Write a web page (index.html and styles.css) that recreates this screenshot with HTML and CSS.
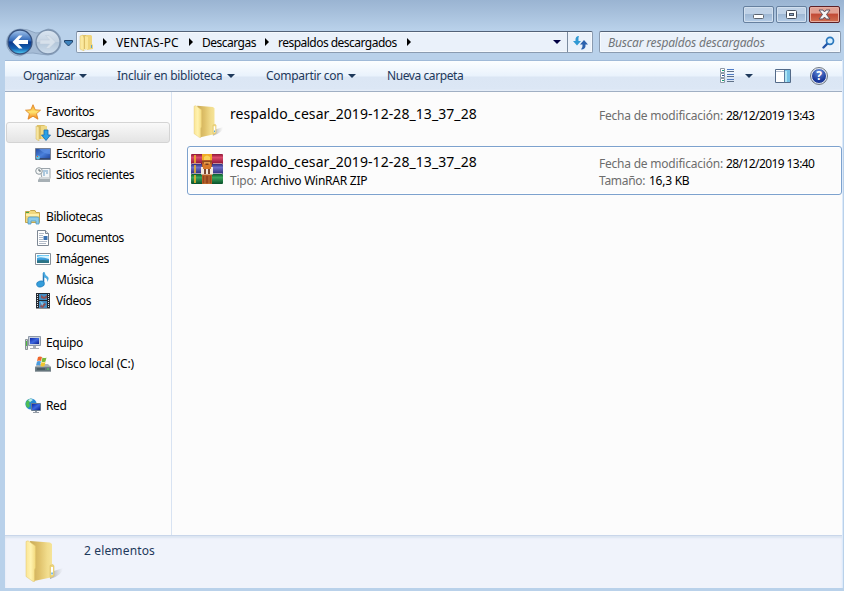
FILE: index.html
```html
<!DOCTYPE html>
<html lang="es">
<head>
<meta charset="utf-8">
<title>respaldos descargados</title>
<link rel="stylesheet" href="styles.css">
</head>
<body>
<svg class="defs" width="0" height="0">
  <defs>
    <linearGradient id="gold" x2="1"><stop offset="0" stop-color="#fbe596"/><stop offset=".5" stop-color="#fff3b0"/><stop offset="1" stop-color="#f3d97d"/></linearGradient>
    <linearGradient id="goldback" x2="1"><stop offset="0" stop-color="#c9aa58"/><stop offset=".4" stop-color="#dfc16a"/><stop offset=".75" stop-color="#f1dc8c"/><stop offset="1" stop-color="#f6e59b"/></linearGradient>
    <linearGradient id="shade" x2="1"><stop offset="0" stop-color="#777" stop-opacity=".6"/><stop offset="1" stop-color="#999" stop-opacity="0"/></linearGradient>
    <linearGradient id="screen" x2="1" y2="1"><stop offset="0" stop-color="#0b25a8"/><stop offset=".5" stop-color="#3d68df"/><stop offset="1" stop-color="#0a1d8c"/></linearGradient>
    <linearGradient id="desk" x2="1" y2="1"><stop offset="0" stop-color="#234a9c"/><stop offset=".5" stop-color="#4a80dc"/><stop offset="1" stop-color="#1c3f96"/></linearGradient>
    <linearGradient id="sky" x2="0" y2="1"><stop offset="0" stop-color="#67c9f5"/><stop offset="1" stop-color="#1674c3"/></linearGradient>
    <linearGradient id="orb" x2="0" y2="1"><stop offset="0" stop-color="#a5c6ec"/><stop offset=".45" stop-color="#2f67b8"/><stop offset=".5" stop-color="#0a3689"/><stop offset=".78" stop-color="#1464b5"/><stop offset="1" stop-color="#55d6f8"/></linearGradient>
    <linearGradient id="orb2" x2="0" y2="1"><stop offset="0" stop-color="#dae5f1"/><stop offset=".48" stop-color="#c6d4e3"/><stop offset=".52" stop-color="#b4c7da"/><stop offset="1" stop-color="#cfdeed"/></linearGradient>
    <linearGradient id="star" x2="0" y2="1"><stop offset="0" stop-color="#f59a22"/><stop offset=".5" stop-color="#ffe673"/><stop offset="1" stop-color="#f17a13"/></linearGradient>
    <linearGradient id="red" x2="0" y2="1"><stop offset="0" stop-color="#8d1636"/><stop offset=".35" stop-color="#dc4a6c"/><stop offset="1" stop-color="#8a1231"/></linearGradient>
    <linearGradient id="blue" x2="0" y2="1"><stop offset="0" stop-color="#30307c"/><stop offset=".35" stop-color="#6d6fc8"/><stop offset="1" stop-color="#2b2b78"/></linearGradient>
    <linearGradient id="green" x2="0" y2="1"><stop offset="0" stop-color="#0b5b30"/><stop offset=".35" stop-color="#3aa45b"/><stop offset="1" stop-color="#07502a"/></linearGradient>
    <symbol id="folder" viewBox="0 0 40 42">
      <path d="M25 38 29 31 38 28Q38 35 25 39Z" fill="url(#shade)"/>
      <path d="M5 1 25 2.500 27 4V27L28 37 9 41Z" fill="url(#goldback)"/>
      <path d="M25 25.500 28 24.500 29 26V36L25 37.500Z" fill="#f0d77d" stroke="#d6b85d" stroke-width=".5"/>
      <path d="M26 27h2v8h-2z" fill="#fff"/><path d="M26.300 32.500h1.500v2h-1.500z" fill="#55a7d8"/>
      <path d="M1 1.500 3 .8 10.500 6V27.500L9.500 30V41.500H8L1 36.500Z" fill="url(#gold)" stroke="#e3c76b" stroke-width=".5"/>
    </symbol>
  </defs>
</svg>
<div class="window">
  <header class="titlebar">
    <div class="controls">
      <span class="ctl"><svg width="31" height="17"><rect x="10.500" y="8.500" width="10" height="4" rx="1" fill="#fff" stroke="#5c6470"/></svg></span>
      <span class="ctl"><svg width="31" height="17"><rect x="10.500" y="4.500" width="10" height="8" rx="1" fill="#fff" stroke="#4b5361"/><rect x="13.500" y="7.500" width="4" height="2" fill="#8ea9c9" stroke="#4b5361"/></svg></span>
      <span class="ctl close"><svg width="31" height="17"><path d="M10 4h4l1.500 2L17 4h4l-3.500 4.500L21 13h-4l-1.500-2-1.500 2h-4l3.500-4.500z" fill="#f5f5f5" stroke="#5f5260"/></svg></span>
    </div>
  </header>
  <div class="navbar">
    <svg class="travel" width="70" height="29">
      <path d="M14 1Q22 1 27 4T42 1A13 13 0 0 1 42 27Q33 26 27 25T14 28A13 13 0 0 1 14 1Z" fill="#a5bcd6" stroke="#8ea6c2"/>
      <circle cx="14" cy="14" r="12" fill="url(#orb)" stroke="#37527e" stroke-width="1.300"/>
      <path d="M6.500 14 13 7.500h3.500L12.500 12H22v4h-9.500l4 4.500H13z" fill="#fff"/>
      <circle cx="42" cy="14" r="12" fill="url(#orb2)" stroke="#7c92ad" stroke-width="1.300"/>
      <path d="M49.500 14 43 7.500h-3.500l4 4.500H34v4h9.500l-4 4.500H43z" fill="#d7e1eb" stroke="#bccbda" stroke-width=".5"/>
      <path d="M58.500 12.500h8v1.500l-4 4-4-4z" fill="#3e83bd" stroke="#20436b"/>
    </svg>
    <div class="address">
      <svg class="addr-icon" width="15" height="17" viewBox="0 0 15 17"><path d="M3 1h6l1 2v12H4z" fill="#dcbf6a"/><path d="M7 1h5l1 1v8l1 1v4l-6 1z" fill="#efd57b"/><path d="M12 11h1v3h-1z" fill="#5aa4d1"/><path d="M1 2l3-1 1 3v13l-4-2z" fill="#fbe99e" stroke="#d9bf67" stroke-width=".5"/><path d="M6 2l3 1v12l-3 1z" fill="#fae79a"/></svg>
      <i class="crumb-arrow a1"></i><span class="crumb c1">VENTAS-PC</span>
      <i class="crumb-arrow"></i><span class="crumb c2">Descargas</span>
      <i class="crumb-arrow"></i><span class="crumb c3">respaldos descargados</span>
      <i class="crumb-arrow"></i>
      <i class="down navy"></i>
      <span class="refresh"><svg width="16" height="14"><path d="M6 0Q2 0 2.500 5H0l4 4.500L8 5H5.500Q5 2 6 0Z" fill="#3099d3"/><path d="M8 13.500q5 0 4.500-5h2.500L11 4 7 8.500h2.500q.5 3-1.500 5Z" fill="#2c62ad"/></svg></span>
    </div>
    <div class="search"><span class="hint">Buscar respaldos descargados</span>
      <svg width="13" height="13"><path d="M1.500 11.500 6 7" stroke="#2253a5" stroke-width="2.400" stroke-linecap="round"/><circle cx="8" cy="4.800" r="3.500" fill="#d7efff" stroke="#2b78bd" stroke-width="1.700"/></svg>
    </div>
  </div>
  <main class="client">
    <div class="toolbar">
      <span class="cmd t1">Organizar</span><i class="down"></i>
      <span class="cmd t2">Incluir en biblioteca</span><i class="down"></i>
      <span class="cmd t3">Compartir con</span><i class="down"></i>
      <span class="cmd t4">Nueva carpeta</span>
      <svg class="view" width="15" height="16"><g fill="#fff" stroke="#8e99a7"><path d="M.5.500h4v4h-4zM.5 5.500h4v4h-4zM.5 10.500h4v4h-4z"/></g><path d="M2 2h2v1H2zM2 12h2v1H2z" fill="#139c70"/><path d="M2 7h2v1H2z" fill="#234f9c"/><path d="M7 1.500h7M7 6.500h7M7 11.500h7" stroke="#507cc5"/><path d="M7 3.500h7M7 8.500h7M7 13.500h7" stroke="#5f7188"/></svg>
      <i class="down"></i>
      <svg class="pane" width="16" height="14"><path d="M.5.500h15v13H.5z" fill="#fff" stroke="#536a88"/><path d="M1 2.500h14" stroke="#b4bfd0"/><path d="M9.500 1h5.500v12H9.500z" fill="#76c1e5"/><path d="M10 2h2v11h-2z" fill="#aee5f4"/><path d="M9.500 1v12" stroke="#5b7ca0"/></svg>
      <span class="help">?</span>
    </div>
    <div class="body">
      <nav class="sidebar">
        <div class="row root"><svg width="16" height="16"><path d="M8 .7 10.200 5.800 15.500 6.200 11.500 9.700 13 15.200 8 12.200 3 15.200 4.400 9.700.5 6.200 5.800 5.800Z" fill="url(#star)" stroke="#dc8120" stroke-width=".8"/></svg><span>Favoritos</span></div>
        <div class="row selected"><svg width="16" height="16"><path d="M2 0h7l2 1v13H3z" fill="#dcbf65"/><path d="M6 1h6v13H6z" fill="#efd987"/><path d="M1 1l3 1v14l-3-2z" fill="#f8e69e" stroke="#cfb35e" stroke-width=".5"/><path d="M9 5h4v5h2.500L11 15.500 6.500 10H9z" fill="#2aa0e5" stroke="#1b6aa9" stroke-width=".8"/></svg><span>Descargas</span></div>
        <div class="row"><svg width="16" height="16"><path d="M.5 2.500h15v11H.5z" fill="url(#desk)" stroke="#778194"/><path d="M4 3h11v5Q9 8 4 3Z" fill="#5f92e6" opacity=".7"/><path d="M1 12h14v1.500H1z" fill="#324771"/><circle cx="3" cy="11.500" r="2" fill="#62c2e1"/><path d="M2 10h1v1H2z" fill="#ef492c"/></svg><span>Escritorio</span></div>
        <div class="row"><svg width="16" height="16"><path d="M5 1.500h10v10H7z" fill="#f3f6f8" stroke="#9ba4aa"/><path d="M8 4h5M8 6h2M11 6h2M8 8h2" stroke="#669bc4"/><path d="M5 10l10 1v4H3v-2z" fill="#a7b0b5"/><path d="M4 10h10l1 2H5z" fill="#d3d8db"/><circle cx="4" cy="4" r="3.300" fill="#f5f7f7" stroke="#8e999e"/><path d="M4 2v2h2" fill="none" stroke="#59666d"/></svg><span>Sitios recientes</span></div>
        <div class="row blank"></div>
        <div class="row root"><svg width="16" height="16"><path d="M.5 2.500h4l1-1H10l1 2h3.500v10H.5z" fill="#f1d87d" stroke="#c5a64d"/><path d="M1 6h13" stroke="#fff0ab" stroke-width="2"/><path d="M1 3h3v1H1z" fill="#46a745"/><path d="M3 15V9.500Q3 8 5 8h7q2 0 2 1.500V15h-3v-3H6v3z" fill="#8bcbe9" stroke="#509bc3" stroke-width=".8"/></svg><span>Bibliotecas</span></div>
        <div class="row"><svg width="16" height="16"><path d="M2.500.500h8l3 3v12h-11z" fill="#fff" stroke="#7e8894"/><path d="M10.500.500v3h3" fill="#e4e8ed" stroke="#7e8894"/><path d="M4 3.500h5M4 5.500h4M4 7.500h4M4 9.500h4M4 11.500h8M4 13.500h7" stroke="#b1bac7"/><path d="M8.500 6h4v4h-4z" fill="#3a72b2"/></svg><span>Documentos</span></div>
        <div class="row"><svg width="16" height="16"><path d="M.5 2.500h15v11H.5z" fill="#fff" stroke="#87909a"/><path d="M2 4h12v8H2z" fill="url(#sky)"/><path d="M2 7q4-2 12 1V5Q6 4 2 6z" fill="#d8f4ff"/><path d="M2 9.500q5-1 12 0V12H2z" fill="#2c7486"/></svg><span>Imágenes</span></div>
        <div class="row"><svg width="16" height="16"><path d="M8.500 1v10" stroke="#2776b4" stroke-width="1.500"/><path d="M8 0h1.500Q10 3 12.500 4.500T12 10q1-4-3-4.500Z" fill="#4aa9df"/><ellipse cx="5.500" cy="12" rx="4" ry="3" transform="rotate(-15 5.500 12)" fill="#359edb" stroke="#1b75b5" stroke-width=".6"/></svg><span>Música</span></div>
        <div class="row"><svg width="16" height="16"><path d="M1 0h14v15.500H1z" fill="#242a32"/><path d="M4 1h8v6H4zM4 8h8v7H4z" fill="#438dc4"/><path d="M6 2l3 2 3-2v3L9 6 6 5zM7 9l4 2-3 4-3-1z" fill="#8f5357"/><path d="M5 8l4 2-2 3z" fill="#75c6ee"/><path d="M2.500 1v14M13.500 1v14" stroke="#dce3e9" stroke-dasharray="1 1"/></svg><span>Vídeos</span></div>
        <div class="row blank"></div>
        <div class="row root"><svg width="16" height="16"><path d="M.5 4.500h2v10h-2z" fill="#d0d6d7" stroke="#899397"/><path d="M1 6h1v5H1z" fill="#50bb42"/><path d="M3.500 1.500h12v9h-12z" fill="#c7d0dd" stroke="#8f99a8"/><path d="M5 3h9v6H5z" fill="url(#screen)"/><path d="M8 11h3v2h3v1H5v-1h3z" fill="#a7adb5"/></svg><span>Equipo</span></div>
        <div class="row disk"><svg width="16" height="16"><path d="M3 8h10l3 3v4H0v-4z" fill="#aeb6b8"/><path d="M0 11h16v4.500H0z" fill="#65757c" stroke="#8f999d" stroke-width=".6"/><path d="M2 13h8" stroke="#354850"/><path d="M12 13h2" stroke="#51dd51"/><path d="M3 1q2-1 4 0L6 5Q4 4 2 5z" fill="#ef672c"/><path d="M7.500 1.500q2 1 4 0l-1 4q-2 1-4 0z" fill="#78b83b"/><path d="M2 5.500q2-1 4 0l-1 4q-2-1-4 0z" fill="#4b9bdd"/><path d="M6.500 6q2 1 4 0l-1 4q-2 1-4 0z" fill="#f2c72d"/></svg><span>Disco local (C:)</span></div>
        <div class="row blank"></div>
        <div class="row root"><svg width="16" height="16"><circle cx="6" cy="6" r="5.600" fill="#2688d6"/><path d="M1 4Q4 0 7 1L6 4 4 5 5 8 3 10Q0 8 1 4Z" fill="#4dbc57"/><path d="M3 2q3-2 5 0L5 4Z" fill="#bfeaf1"/><path d="M6.500 5.500h9v7h-9z" fill="#a9c1dc" stroke="#66798f"/><path d="M7 6h8v6H7z" fill="url(#screen)"/><path d="M10 13h2v1h2v1H8v-1h2z" fill="#949ca6"/></svg><span>Red</span></div>
      </nav>
      <section class="files">
        <div class="file">
          <svg class="file-icon small-folder" width="32" height="33"><use href="#folder"/></svg>
          <div class="about"><div class="name">respaldo_cesar_2019-12-28_13_37_28</div></div>
          <div class="meta"><div><span class="lbl date">Fecha de modificación:</span><span class="val when">28/12/2019 13:43</span></div></div>
        </div>
        <div class="file focus">
          <svg class="file-icon" width="32" height="32">
            <rect y="1" width="32" height="10" rx="1" fill="url(#red)"/><rect y="11" width="32" height="10" rx="1" fill="url(#blue)"/><rect y="21" width="32" height="10" rx="1" fill="url(#green)"/>
            <path d="M4 2v8M4 12v8M4 22v8" stroke="#f0b62b" stroke-width="1.600"/><path d="M1 10.500h9M22 10.500h9M1 20.500h9M22 20.500h9" stroke="#e8dde2" opacity=".6"/>
            <path d="M11 1h10v30H11z" fill="#b65c22"/><path d="M11 1h10v6H11z" fill="#f0ac27"/><path d="M13 4q3-3 6 0v3h-6z" fill="#f9d25a"/><path d="M11 8h10v1.500H11z" fill="#8e4a1f"/><path d="M13 9h6v5h-6z" fill="#e69a48"/><path d="M10 14h12v7.500H10z" fill="#f4e9dc"/><path d="M12 11h8v5h-8z" fill="#d87929"/><path d="M14.500 10.500h3v1.500h-3z" fill="#7c3f20"/><path d="M13 16h2v5h-2zM17 16h2v5h-2z" fill="#7a4630"/><path d="M12 23h8v7h-8z" fill="#95451f"/><path d="M14 23v8M18 23v8" stroke="#c27639"/>
          </svg>
          <div class="about"><div class="name">respaldo_cesar_2019-12-28_13_37_28</div><div class="sub"><span class="lbl type">Tipo:</span><span class="val kind">Archivo WinRAR ZIP</span></div></div>
          <div class="meta"><div><span class="lbl date">Fecha de modificación:</span><span class="val when">28/12/2019 13:40</span></div><div><span class="lbl size">Tamaño:</span><span class="val bytes">16,3 KB</span></div></div>
        </div>
      </section>
    </div>
    <footer class="details"><svg width="40" height="42"><use href="#folder"/></svg><span>2 elementos</span></footer>
  </main>
</div>
</body>
</html>
```
FILE: styles.css
```css
* { box-sizing: border-box; }
body { margin: 0; overflow: hidden; font: 12px/17px "Noto Sans", "Open Sans", sans-serif; color: #000; }
svg { display: block; flex: none; }
.defs { position: absolute; }
.window { width: 844px; height: 591px; display: flex; flex-direction: column; background: linear-gradient(#9ab4d2 0, #a6bfdb 12px, #b9d1ea 30px, #b9d1ea 100%); }
.titlebar { height: 28px; padding: 6px 4px 0 0; }
.controls { display: flex; justify-content: flex-end; gap: 2px; }
.ctl { width: 31px; height: 17px; border: 1px solid #66809f; border-radius: 2px; background: linear-gradient(#c0d2e7 0 45%, #9fb8d4 50%, #b5cde8); box-shadow: inset 0 0 0 1px #d2e0ef; }
.ctl svg { margin: -1px; }
.ctl.close { border-color: #5d2026; background: linear-gradient(#e1a093 0 40%, #c24a36 48%, #cf6f50); box-shadow: inset 0 0 0 1px #e6ada0; }
.navbar { height: 32px; display: flex; align-items: flex-start; }
.travel { margin-left: 6px; }
.address { width: 517px; height: 22px; margin-top: 3px; border: 1px solid #8a9bb0; border-top-color: #526278; background: #eaf1fa; display: flex; align-items: center; }
.address, .search { border-radius: 2px; box-shadow: inset 0 0 0 1px #f5f9fd; }
.addr-icon { margin-left: 2px; }
.crumb-arrow { border: 4px solid transparent; border-left-color: #000; border-right: 0; flex: none; }
.a1 { margin-left: 9px; }
.crumb { white-space: nowrap; padding-left: 9px; flex: none; }
.c1 { width: 82px; letter-spacing: .1px; }
.c2 { width: 72px; letter-spacing: -.5px; }
.c3 { width: 138px; letter-spacing: -.52px; }
.down { border: 4px solid transparent; border-top-color: #1e395b; border-bottom: 0; flex: none; }
.down.navy { border-top-color: #000042; margin-left: auto; margin-right: 6px; }
.refresh { width: 25px; height: 20px; border-left: 1px solid #7b8b9f; padding: 4px 0 0 5px; }
.search { width: 242px; height: 22px; margin: 3px 0 0 6px; border: 1px solid #8a9bb0; border-top-color: #526278; background: #eaf1fa; display: flex; align-items: center; justify-content: space-between; padding: 0 5px 0 8px; font-style: italic; color: #717579; white-space: nowrap; }
.hint { letter-spacing: -.18px; }
.client { width: 838px; height: 528px; margin-left: 5px; border-right: 1px solid #dceafb; background: #fcfcfc; }
.toolbar { height: 32px; border-top: 1px solid #a0bad8; border-bottom: 1px solid #a0afc3; background: linear-gradient(#fcfeff 0, #e9f2fc 15px, #dbe6f4 16px, #dce7f5 28px, #e7eff9); display: flex; align-items: center; color: #1e395b; white-space: nowrap; }
.cmd { flex: none; position: relative; top: -1px; }
.t1 { margin-left: 18px; width: 56px; letter-spacing: -.5px; }
.t2 { margin-left: 30px; width: 110px; letter-spacing: -.28px; }
.t3 { margin-left: 31px; width: 82px; letter-spacing: -.28px; }
.t4 { margin-left: 31px; letter-spacing: -.42px; }
.view { margin-left: auto; margin-right: 10px; }
.pane { margin-left: 22px; }
.help { width: 16px; height: 16px; margin: 0 15px 0 20px; border-radius: 50%; border: 1px solid #dfe3ec; outline: 1px solid #707883; background: radial-gradient(circle at 50% 20%, #6790dc, #1b399b 65%); color: #fff; font-weight: 700; line-height: 14px; text-align: center; }
.body { height: 443px; display: flex; }
.sidebar { width: 167px; border-right: 1px solid #d8e3f2; padding-top: 9px; }
.row { height: 21px; margin: 0 1px; padding-left: 29px; display: flex; align-items: center; gap: 5px; letter-spacing: -.4px; white-space: nowrap; }
.row.root { padding-left: 19px; }
.row.selected { border: 1px solid #d4d4d4; border-radius: 3px; padding-left: 28px; letter-spacing: -.6px; background: linear-gradient(#f9f9f9, #e4e4e4); }
.row.disk { letter-spacing: -.18px; }
.files { flex: 1; padding: 6px 0 0 15px; }
.file { height: 48px; border: 1px solid transparent; border-radius: 3px; display: flex; padding-left: 3px; white-space: nowrap; }
.file.focus { height: 49px; border-color: #7da2ce; box-shadow: inset 0 0 0 1px #fff; }
.file-icon { margin-top: 6px; }
.small-folder { margin: 6px -2px 0 2px; }
.about { width: 376px; padding: 5px 0 0 7px; }
.name { font-size: 14px; line-height: 20px; letter-spacing: .07px; }
.sub, .meta { line-height: 17px; }
.meta { padding-top: 8px; }
.meta > div, .sub { display: flex; }
.lbl { color: #6d6d6d; letter-spacing: -.22px; }
.val { letter-spacing: -.25px; }
.val.when { letter-spacing: -.58px; }
.date { width: 127px; }
.type { width: 31px; }
.size { width: 50px; letter-spacing: -.3px; }
.details { height: 53px; border-top: 1px solid #c9d6ea; box-shadow: inset 0 2px 2px #dce5f2; background: #f0f3fb; padding: 4px 0 0 20px; display: flex; color: #1e395b; }
.details span { margin: 2px 0 0 19px; letter-spacing: .15px; }
```
